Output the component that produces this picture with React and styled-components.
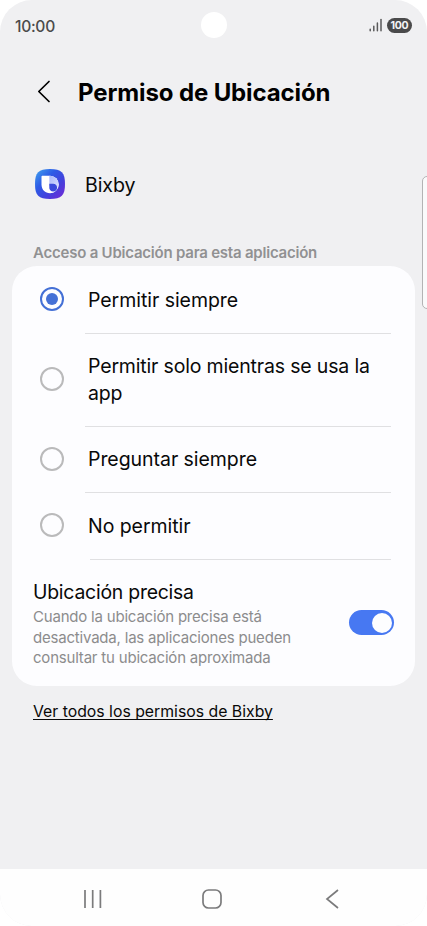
import React, { useState } from 'react';
import styled, { createGlobalStyle } from 'styled-components';


const GlobalStyle = createGlobalStyle`
    * {
        box-sizing: border-box;
    }
    body {
        margin: 0;
        background: #fff;
        font-family: Inter, Roboto, "Liberation Sans", sans-serif;
        color: #090909;
    }
`
const Phone = styled.div`
    position: relative;
    width: 427px;
    height: 926px;
    display: flex;
    flex-direction: column;
    overflow: hidden;
    border-radius: 32px;
    background: #f0f0f2;
`
const StatusBar = styled.div`
    height: 50px;
    padding: 0 15px;
    display: grid;
    grid-template-columns: 1fr 26px 1fr;
    align-items: center;
`
const Clock = styled.span`
    padding-top: 2px;
    font-size: 15.6px;
    font-weight: 500;
    letter-spacing: -0.3px;
    color: #4a4a4b;
`
const Camera = styled.div`
    width: 26px;
    height: 26px;
    border-radius: 50%;
    background: #fff;
`
const StatusIcons = styled.div`
    display: flex;
    justify-content: flex-end;
    align-items: center;
    gap: 5px;
`
const Battery = styled.span`
    width: 25px;
    height: 15px;
    border-radius: 8px;
    background: #4a4a4b;
    color: #f4f4f5;
    font-size: 10.5px;
    font-weight: 700;
    line-height: 15px;
    letter-spacing: -0.3px;
    text-align: center;
`
const Header = styled.header`
    height: 82px;
    padding-left: 36px;
    display: flex;
    align-items: center;
    gap: 27px;
`
const Title = styled.h1`
    margin: 0;
    padding-top: 2px;
    font-size: 24px;
    font-weight: 700;
    letter-spacing: -0.12px;
    white-space: nowrap;
    color: #000;
`
const AppRow = styled.div`
    height: 103px;
    padding-left: 35px;
    display: flex;
    align-items: center;
    gap: 20px;
`
const AppName = styled.span`
    padding-top: 2px;
    font-size: 19.6px;
    letter-spacing: -0.1px;
`
const SectionLabel = styled.h2`
    height: 31px;
    margin: 0;
    padding: 8px 0 0 33px;
    font-size: 15px;
    font-weight: 600;
    line-height: 20px;
    letter-spacing: -0.22px;
    white-space: nowrap;
    color: #919192;
`
const Card = styled.section`
    height: 420px;
    margin: 0 12px;
    padding-top: 1px;
    border-radius: 25px;
    background: #fdfdff;
`
const Option = styled.div`
    height: ${({ $height }) => $height}px;
    display: flex;
    align-items: center;
    padding: 0 20px 2px 28px;
    cursor: pointer;
`
const Radio = styled.span`
    width: 24px;
    height: 24px;
    border: 2px solid ${({ $checked }) => ($checked ? '#4470d6' : '#bababb')};
    border-radius: 50%;
    display: grid;
    place-items: center;
    &::after {
        content: "";
        width: 12px;
        height: 12px;
        border-radius: 50%;
        background: ${({ $checked }) => ($checked ? '#4470d6' : 'transparent')};
    }
`
const OptionLabel = styled.div`
    flex: 1;
    padding: 2px 0 0 24px;
    font-size: 19.5px;
    line-height: 27px;
    letter-spacing: ${({ $spacing }) => $spacing}px;
    white-space: pre-line;
`
const Divider = styled.div`
    height: 1px;
    margin: 0 24px 0 ${({ $left }) => $left}px;
    background: #e0e0e2;
`
const PreciseRow = styled.div`
    padding: 19px 21px 0 21px;
    display: flex;
    justify-content: space-between;
`
const PreciseTitle = styled.div`
    font-size: 19.4px;
    line-height: 26px;
    letter-spacing: -0.22px;
`
const PreciseText = styled.p`
    margin: 2px 0 0;
    font-size: 15px;
    line-height: 20.5px;
    letter-spacing: -0.2px;
    white-space: pre-line;
    color: #8c8c8d;
`
const Switch = styled.button`
    width: 45px;
    height: 25px;
    margin-top: 31px;
    padding: 0 2px;
    border: none;
    border-radius: 13px;
    display: flex;
    align-items: center;
    justify-content: ${({ $on }) => ($on ? 'flex-end' : 'flex-start')};
    background: ${({ $on }) => ($on ? '#4778f2' : '#b8b8b9')};
    &::after {
        content: "";
        width: 20px;
        height: 20px;
        border-radius: 50%;
        background: #fdfdff;
    }
`
const AllPermissions = styled.a`
    align-self: flex-start;
    margin: 15px 0 0 33px;
    font-size: 15.8px;
    line-height: 22px;
    letter-spacing: 0;
    white-space: nowrap;
    text-decoration: underline;
    text-decoration-skip-ink: none;
    text-underline-offset: 2px;
    text-decoration-thickness: 1px;
`
const EdgeHandle = styled.div`
    position: absolute;
    top: 176px;
    right: -8px;
    width: 13px;
    height: 133px;
    border: 1px solid #b3b3b4;
    border-radius: 5px;
    background: #fafafb;
`
const NavBar = styled.nav`
    height: 57px;
    margin-top: auto;
    padding: 2px 83px 0 82px;
    display: grid;
    grid-template-columns: 120px 1fr 20px;
    align-items: center;
    background: #fefefe;
`

const options = [
    { label: 'Permitir siempre', height: 66, dividerLeft: 73, spacing: -0.05 },
    { label: 'Permitir solo mientras se usa la\napp', height: 92, dividerLeft: 73, spacing: -0.17 },
    { label: 'Preguntar siempre', height: 65, dividerLeft: 73, spacing: -0.05 },
    { label: 'No permitir', height: 66, dividerLeft: 78, spacing: -0.05 },
]

function BixbyIcon(){
    return (
        <svg width="30" height="30" viewBox="0 0 30 30">
            <defs>
                <linearGradient id="tile" x1="0" y1="0" x2="1" y2="1">
                    <stop offset="0" stopColor="#42a5ee" />
                    <stop offset="0.35" stopColor="#2d5be6" />
                    <stop offset="0.65" stopColor="#4440dc" />
                    <stop offset="1" stopColor="#7527d6" />
                </linearGradient>
                <linearGradient id="bowl" x1="0" y1="0" x2="1" y2="1">
                    <stop offset="0" stopColor="#a9b7fa" />
                    <stop offset="1" stopColor="#dcdfff" />
                </linearGradient>
            </defs>
            <path d="M15 0C26.5 0 30 3.5 30 15S26.5 30 15 30 0 26.5 0 15 3.5 0 15 0Z" fill="url(#tile)" />
            <path d="M7.2 6.8H15A8.7 8.7 0 0 1 15 24.2C10 24.2 6.5 20.5 6.5 15.5V7.5Q6.5 6.8 7.2 6.8Z" fill="#fff" />
            <path d="M14.3 6.8H15A8.7 8.7 0 0 1 23.7 15.5Q23.7 17 23 18.8L14.3 17Z" fill="url(#bowl)" />
            <path d="M14.3 14.8H18A3.9 3.9 0 1 1 14.3 18.4Z" fill="#3b49dc" />
        </svg>
    );
}

export default function App(){
    const [selected, setSelected] = useState(0);
    const [precise, setPrecise] = useState(true);

    return (
        <Phone>
            <GlobalStyle />
            <StatusBar>
                <Clock>10:00</Clock>
                <Camera />
                <StatusIcons>
                    <svg width="13" height="14" viewBox="0 0 13 14" stroke="#5a5a5b" strokeWidth="1.5" strokeLinecap="round">
                        <path d="M1.2 11.3V12.7M4.8 8.3V12.7M8.4 5V12.7" />
                        <path d="M12 1.5V12.7" />
                    </svg>
                    <Battery>100</Battery>
                </StatusIcons>
            </StatusBar>
            <Header>
                <svg width="15" height="24" viewBox="0 0 15 24" fill="none" stroke="#000" strokeWidth="1.7" strokeLinecap="round" strokeLinejoin="round">
                    <path d="M13 2.5L2.8 12.5L13 22.5" />
                </svg>
                <Title>Permiso de Ubicación</Title>
            </Header>
            <AppRow>
                <BixbyIcon />
                <AppName>Bixby</AppName>
            </AppRow>
            <SectionLabel>Acceso a Ubicación para esta aplicación</SectionLabel>
            <Card>
                {options.map((option, i) => (
                    <React.Fragment key={option.label}>
                        <Option $height={option.height} onClick={() => setSelected(i)}>
                            <Radio $checked={selected === i} />
                            <OptionLabel $spacing={option.spacing}>{option.label}</OptionLabel>
                        </Option>
                        <Divider $left={option.dividerLeft} />
                    </React.Fragment>
                ))}
                <PreciseRow>
                    <div>
                        <PreciseTitle>Ubicación precisa</PreciseTitle>
                        <PreciseText>{'Cuando la ubicación precisa está\ndesactivada, las aplicaciones pueden\nconsultar tu ubicación aproximada'}</PreciseText>
                    </div>
                    <Switch $on={precise} onClick={() => setPrecise(!precise)} />
                </PreciseRow>
            </Card>
            <AllPermissions>Ver todos los permisos de Bixby</AllPermissions>
            <EdgeHandle />
            <NavBar>
                <svg width="21" height="20" viewBox="0 0 21 20" stroke="#7b7b7c" strokeWidth="1.7">
                    <path d="M3 1V19M10.7 1V19M18.4 1V19" />
                </svg>
                <svg width="20" height="20" viewBox="0 0 20 20" fill="none" stroke="#7b7b7c" strokeWidth="1.7">
                    <rect x="1" y="1" width="18" height="18" rx="5.5" />
                </svg>
                <svg width="20" height="20" viewBox="0 0 20 20" fill="none" stroke="#7b7b7c" strokeWidth="1.7">
                    <path d="M14 1L3 10L14 19" />
                </svg>
            </NavBar>
        </Phone>
    );
}
